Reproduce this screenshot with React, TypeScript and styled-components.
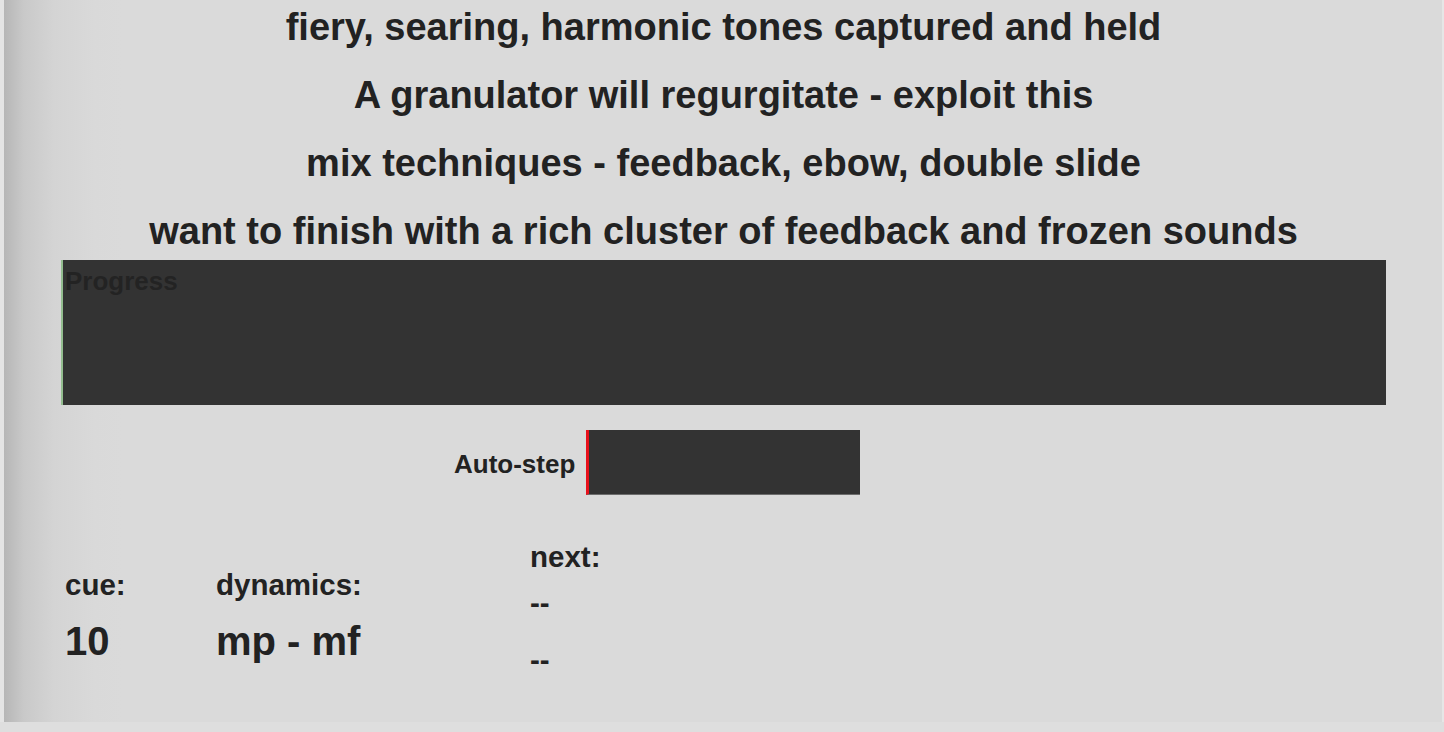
import React from "react";
import styled, { createGlobalStyle } from "styled-components";

const Global = createGlobalStyle`
  html, body { margin: 0; padding: 0; }
  body {
    background: #dedede;
    font-family: "Liberation Sans", Arial, Helvetica, sans-serif;
    color: #222;
    overflow: hidden;
  }
`;

const Page = styled.div`
  box-sizing: border-box;
  width: 1444px;
  height: 722px;
  border-left: 4px solid #e4e4e4;
  border-right: 2px solid #e6e6e6;
  background: linear-gradient(to right, #b6b6b6 0px, #c9c9c9 20px, #d4d4d4 50px, #d9d9d9 90px, #dadada 120px);
  padding: 5px 56px 0 57px;
  display: flex;
  flex-direction: column;
`;

const Headlines = styled.div`
  display: flex;
  flex-direction: column;
  gap: 24px;
`;

const Headline = styled.h1`
  margin: 0;
  font-size: 38px;
  line-height: 44px;
  font-weight: 700;
  text-align: center;
  white-space: nowrap;
  color: #222;
`;

const Progress = styled.div`
  margin-top: 7px;
  height: 145px;
  background: #333;
  border-left: 2px solid #93bd8f;
  box-sizing: border-box;
  padding: 8px 2px;
`;

const ProgressLabel = styled.div`
  font-size: 26px;
  line-height: 1;
  font-weight: 700;
  color: #232323;
`;

const AutoRow = styled.div`
  margin-top: 25px;
  margin-left: 393px;
  display: flex;
  align-items: center;
  gap: 11px;
`;

const AutoLabel = styled.span`
  font-size: 26px;
  font-weight: 700;
  line-height: 30px;
  margin-top: 3px;
`;

const AutoBox = styled.div`
  box-sizing: border-box;
  width: 274px;
  height: 65px;
  background: #333;
  border-left: 3px solid #e8111b;
  border-bottom: 1px solid #6c6c6c;
`;

const Bottom = styled.div`
  display: flex;
  align-items: flex-start;
  padding-left: 4px;
  margin-top: 45px;
`;

const Col = styled.div<{ $w?: number; $top?: number }>`
  display: flex;
  flex-direction: column;
  width: ${(p) => (p.$w ? `${p.$w}px` : "auto")};
  margin-top: ${(p) => p.$top ?? 0}px;
`;

const Label = styled.div`
  font-size: 29.5px;
  line-height: 34px;
  font-weight: 700;
`;

const Value = styled.div`
  font-size: 40px;
  line-height: 46px;
  font-weight: 700;
  margin-top: 16px;
`;

const Dash = styled.div<{ $gap: number }>`
  font-size: 29.5px;
  line-height: 34px;
  font-weight: 700;
  margin-top: ${(p) => p.$gap}px;
`;

export default function App() {
  return (
    <>
      <Global />
      <Page>
        <Headlines>
          <Headline>fiery, searing, harmonic tones captured and held</Headline>
          <Headline>A granulator will regurgitate - exploit this</Headline>
          <Headline>mix techniques - feedback, ebow, double slide</Headline>
          <Headline>want to finish with a rich cluster of feedback and frozen sounds</Headline>
        </Headlines>
        <Progress>
          <ProgressLabel>Progress</ProgressLabel>
        </Progress>
        <AutoRow>
          <AutoLabel>Auto-step</AutoLabel>
          <AutoBox />
        </AutoRow>
        <Bottom>
          <Col $w={151} $top={28}>
            <Label>cue:</Label>
            <Value>10</Value>
          </Col>
          <Col $w={314} $top={28}>
            <Label>dynamics:</Label>
            <Value>mp - mf</Value>
          </Col>
          <Col>
            <Label>next:</Label>
            <Dash $gap={12}>--</Dash>
            <Dash $gap={23}>--</Dash>
          </Col>
        </Bottom>
      </Page>
    </>
  );
}
